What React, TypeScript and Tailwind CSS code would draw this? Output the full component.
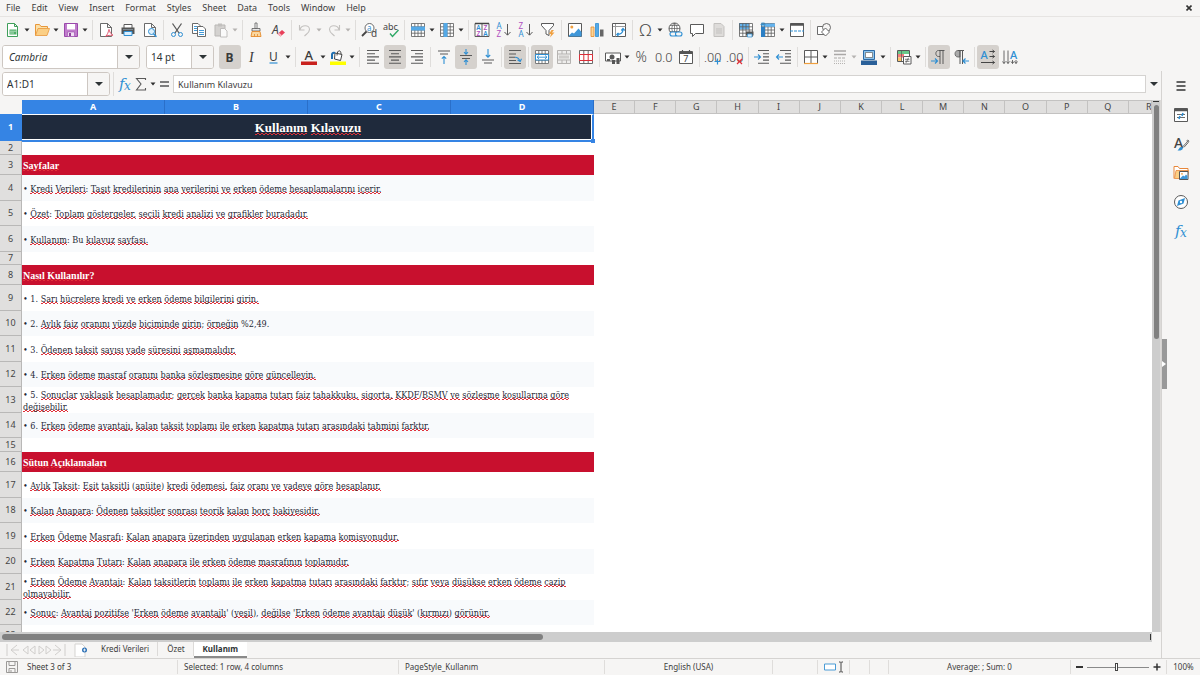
import { useState } from "react";
import type { ReactNode } from "react";

const GRAY = "#5a5a5a";
const BLUE = "#2f8fd3";
const PURPLE = "#b04fc0";
const ORANGE = "#f0a040";
const UI = "Noto Sans, sans-serif";

function gridLines(stroke: string) {
  return <path d="M1.5 1.5h13v13h-13zM1.5 4.8h13M1.5 8h13M1.5 11.2h13M4.8 1.5v13M8 1.5v13M11.2 1.5v13" fill="none" stroke={stroke} strokeWidth="0.8" />;
}

function pageShape(stroke: string, fill = "#fff") {
  return <path d="M2.5 1.5h7l4 4v9h-11zM9.5 1.5v4h4" fill={fill} stroke={stroke} strokeWidth="0.9" />;
}

function hLines(d: string) {
  return <path d={d} fill="none" stroke={GRAY} strokeWidth="1.1" />;
}

const icons: Record<string, ReactNode> = {
  new: (
    <>
      <path d="M2.5 1.5h7l3 3v10h-10zM9.5 1.5v3h3" fill="#fff" stroke="#3f9f5a" />
      <path d="M4.5 7.5h7v5h-7z" fill="#4fae68" />
      <path d="M5 9.2h6M5 11h4" stroke="#e5f5e8" strokeWidth="0.7" />
    </>
  ),
  open: (
    <>
      <path d="M1.5 13.5v-11h4l1.5 2h6.500v2" fill="#fbe0a8" stroke="#e8973a" />
      <path d="M1.500 13.500l2.500-7h11.500l-2.500 7z" fill="#fbcf85" stroke="#e8973a" strokeWidth="0.8" />
    </>
  ),
  save: (
    <>
      <path d="M1.500 1.500h13v13h-13z" fill="#c07ccc" stroke="#9a49ab" />
      <path d="M4 2h8v5.500h-8z" fill="#fff" />
      <path d="M4.500 10h7v4.500h-7z" fill="#f0dff3" stroke="#9a49ab" strokeWidth="0.6" />
      <path d="M6 11h2v3h-2z" fill="#8f419f" />
    </>
  ),
  pdf: (
    <>
      {pageShape(GRAY)}
      <path d="M7.500 14.500c2-2 3-4.500 3-6 0-1.500 1-1.500 1 0 0 2 2 4 3.500 4.500 0 1-4.500-.500-7.500 1.500z" fill="#fff" stroke="#d9304c" strokeWidth="0.8" />
    </>
  ),
  print: (
    <>
      <path d="M4 2.500h8v4h-8z" fill="#fff" stroke={GRAY} />
      <path d="M1.500 5.500h13v6.500h-13z" fill="#555" />
      <path d="M3 7.500h10" stroke="#7d8890" />
      <path d="M4 9.500h8v4h-8z" fill="#d9efff" stroke={BLUE} />
    </>
  ),
  preview: (
    <>
      {pageShape(GRAY)}
      <circle cx="9.500" cy="9.500" r="3" fill="#dff0fb" stroke={BLUE} />
      <path d="M11.500 11.800l3 3" stroke={BLUE} strokeWidth="1.500" />
    </>
  ),
  cut: (
    <>
      <path d="M3.500 1.500l6.500 9.500M12.500 1.500l-6.500 9.500" stroke={GRAY} strokeWidth="1.300" />
      <circle cx="4.500" cy="12.500" r="2" fill="none" stroke={BLUE} />
      <circle cx="11.500" cy="12.500" r="2" fill="none" stroke={BLUE} />
    </>
  ),
  copy: (
    <>
      <path d="M1.500 1.500h5.500l2.500 2.500v7.500h-8z" fill="#fff" stroke={GRAY} strokeWidth="0.9" />
      <path d="M3 4.500h3M3 6.500h3M3 8.500h3" stroke={BLUE} strokeWidth="0.9" />
      <path d="M6.500 4.500h5.500l2.500 2.500v7.500h-8z" fill="#fff" stroke={GRAY} strokeWidth="0.9" />
      <path d="M8 8.500h5M8 10.500h5M8 12.500h5" stroke={BLUE} strokeWidth="0.9" />
    </>
  ),
  paste: (
    <>
      <path d="M2 3h10v11h-10z" fill="#d4d2d0" stroke="#b9b7b5" />
      <path d="M5 1.500h4v3h-4z" fill="#c2c0be" />
      <path d="M7.500 6.500h4l2.500 2.500v6h-6.500z" fill="#fafafa" stroke="#b5b3b1" strokeWidth="0.8" />
    </>
  ),
  brush: (
    <>
      <path d="M7 1h2v5.500h-2z" fill="#fff" stroke={GRAY} strokeWidth="0.8" />
      <path d="M4 6.500h8v2.500h-8z" fill="#e9e9e9" stroke={GRAY} strokeWidth="0.8" />
      <path d="M4 9.500h8l1 5h-10z" fill="#fad7a0" stroke="#e48a2b" strokeWidth="0.9" />
      <path d="M6.500 14.500v-2.500M9.500 14.500v-2.500" stroke="#e48a2b" strokeWidth="0.8" />
    </>
  ),
  clear: (
    <>
      <text x="2" y="11.500" fontSize="12" fontStyle="italic" fontFamily={UI} fill="#444">A</text>
      <path d="M7.500 12l4.500-4 3 2.500-4.500 4z" fill="#e8405a" />
      <path d="M7.500 12l1.500-1.300 3 2.500-1.500 1.300z" fill="#f7b5bf" />
    </>
  ),
  undo: <path d="M2.500 3v5h5M3 7.500c1.500-5 9.500-5 9.500 0 0 3-2.500 4-5 6.500" fill="none" stroke="#c3c1bf" strokeWidth="1.100" />,
  redo: <path d="M13.500 3v5h-5M13 7.500c-1.500-5-9.500-5-9.500 0 0 3 2.500 4 5 6.500" fill="none" stroke="#c3c1bf" strokeWidth="1.100" />,
  find: (
    <>
      <circle cx="8.500" cy="6" r="4.500" fill="#fff" stroke={GRAY} strokeWidth="0.9" />
      <text x="6" y="8.500" fontSize="8" fontFamily={UI} fill={BLUE}>a</text>
      <path d="M5.500 9.500l-4.500 4.500" stroke="#444" strokeWidth="1.800" />
      <text x="10" y="15" fontSize="10" fontFamily={UI} fill="#444">d</text>
    </>
  ),
  spell: (
    <>
      <text x="0" y="8" fontSize="9" fontFamily={UI} fill="#444">abc</text>
      <path d="M7 11.500l2.500 3 6-6.500" fill="none" stroke="#2fa866" strokeWidth="1.400" />
    </>
  ),
  row: (
    <>
      <path d="M1 1h14v14h-14z" fill="#fff" />
      {gridLines(GRAY)}
      <path d="M1 4.500h14v4h-14z" fill="#55a9e6" />
    </>
  ),
  col: (
    <>
      <path d="M1 1h14v14h-14z" fill="#fff" />
      {gridLines(GRAY)}
      <path d="M4.500 1h4v14h-4z" fill="#55a9e6" />
    </>
  ),
  sort: (
    <>
      <path d="M1 1.500h14v13h-14zM8 2v13" fill="#fff" stroke={GRAY} />
      <path d="M1 1.500h14" stroke="#444" strokeWidth="1.500" />
      <g fontSize="6.500" fontFamily={UI} fontWeight="600">
        <text x="2.300" y="8.200" fill={BLUE}>A</text>
        <text x="2.500" y="13.800" fill={PURPLE}>Z</text>
        <text x="9.500" y="8.200" fill={PURPLE}>Z</text>
        <text x="9.300" y="13.800" fill={BLUE}>A</text>
      </g>
    </>
  ),
  az: (
    <>
      <text x="0.500" y="7" fontSize="8" fontFamily={UI} fill={BLUE}>A</text>
      <text x="0.500" y="15" fontSize="8" fontFamily={UI} fill={PURPLE}>Z</text>
      <path d="M11.500 2v11M8.500 10l3 3.200 3-3.200" fill="none" stroke={GRAY} />
    </>
  ),
  za: (
    <>
      <text x="0.500" y="7" fontSize="8" fontFamily={UI} fill={PURPLE}>Z</text>
      <text x="0.500" y="15" fontSize="8" fontFamily={UI} fill={BLUE}>A</text>
      <path d="M11.500 2v11M8.500 10l3 3.200 3-3.200" fill="none" stroke={GRAY} />
    </>
  ),
  filter: (
    <>
      <path d="M1.500 1.500h12v2l-4.500 5v5l-3-1.500v-3.500l-4.500-5z" fill="#fff" stroke={GRAY} />
      <path d="M11.500 8l-2.500 4h2l-1 3.500 4.500-5h-2.500l2-2.500z" fill={ORANGE} />
    </>
  ),
  image: (
    <>
      <path d="M1.500 1.500h13v13h-13z" fill="#fff" stroke={GRAY} />
      <circle cx="4.800" cy="5" r="1.500" fill={ORANGE} />
      <path d="M2 13.500l3-3 2 1 4.500-5 3 3.500v4.500h-12.500z" fill="#3f97d9" />
    </>
  ),
  chart: (
    <>
      <path d="M2 5h3v9.500h-3z" fill="#fbd598" stroke="#e48a2b" strokeWidth="0.8" />
      <path d="M6.500 1.500h3v13h-3z" fill="#55a9e6" stroke={BLUE} strokeWidth="0.8" />
      <path d="M11 7.500h3.500v7h-3.500z" fill="#666" />
    </>
  ),
  pivot: (
    <>
      <path d="M1.500 1.500h13v13h-13z" fill="#fff" stroke={GRAY} />
      <path d="M2 4.500h12.500M4.500 2v12.500" stroke="#9a9a9a" />
      <path d="M6 12.500c4 0 6-2 6-5.500M10.300 8.500l1.700-2 1.700 2M7.500 10.800l-1.700 1.700 1.700 1.700" fill="none" stroke={BLUE} strokeWidth="1.200" />
    </>
  ),
  omega: <text x="1.500" y="14" fontSize="17" fontFamily="Noto Sans, DejaVu Sans, sans-serif" fontWeight="300" fill="#4a4a4a">Ω</text>,
  link: (
    <>
      <circle cx="7.500" cy="6.500" r="5.500" fill="#fff" stroke={GRAY} />
      <path d="M2 6.500h11M7.500 1v11M3 3.500h9M3 9.500h9M7.500 1c-3.500 3-3.500 8 0 11M7.500 1c3.500 3 3.500 8 0 11" fill="none" stroke={GRAY} strokeWidth="0.7" />
      <rect x="3" y="10" width="6.500" height="4" rx="2" fill="#f6f5f4" stroke={BLUE} strokeWidth="1.100" />
      <rect x="8.500" y="10" width="6.500" height="4" rx="2" fill="#f6f5f4" stroke={BLUE} strokeWidth="1.100" />
    </>
  ),
  comment: <path d="M1.500 2.500h13v9h-8l-3 3v-3h-2z" fill="#fff" stroke={GRAY} />,
  header: (
    <>
      <path d="M3 1.500h7l3 3v10h-10z" fill="#dedcda" stroke="#c3c1bf" />
      <path d="M5 7h6M5 9h6M5 11h6" stroke="#c3c1bf" />
    </>
  ),
  printarea: (
    <>
      <path d="M1 1h14v14h-14z" fill="#fff" />
      <path d="M1 1h10v6.500h-10z" fill="#63b3ee" />
      {gridLines(GRAY)}
      <path d="M8 9.500h7.500v4h-7.500z" fill="#555" />
      <path d="M9.500 12h4.500v3h-4.500z" fill="#d9efff" stroke={BLUE} strokeWidth="0.7" />
    </>
  ),
  freeze: (
    <>
      <path d="M1 1h14v14h-14z" fill="#fff" />
      {gridLines(GRAY)}
      <path d="M1 5h4v10h-4z" fill="#2c7fc4" />
      <path d="M5 1.500h10v3.300h-10z" fill="#63b3ee" />
      <path d="M3 0v5M.500 2.500h5M1 .800l4 3.400M5 .800l-4 3.400" stroke={BLUE} strokeWidth="0.8" />
    </>
  ),
  split: (
    <>
      <path d="M1.500 1.500h13v13h-13z" fill="#fff" stroke={GRAY} />
      <path d="M1.500 2.500h13" stroke="#555" strokeWidth="2.500" />
      <path d="M1 9h14" stroke={BLUE} strokeDasharray="3 1" />
    </>
  ),
  shapes: (
    <>
      <path d="M1.500 4.500h8v8h-8z" fill="#fff" stroke={GRAY} strokeWidth="0.9" />
      <circle cx="10.500" cy="5.500" r="4" fill="#f6f5f4" stroke={GRAY} strokeWidth="0.9" />
      <path d="M9.500 6l4 4-4 4-4-4z" fill="#fff" stroke={GRAY} strokeWidth="0.9" />
    </>
  ),
  bold: <text x="3.500" y="12.500" fontSize="12" fontWeight="700" fontFamily={UI} fill="#3a3a3a">B</text>,
  italic: <text x="5" y="12.500" fontSize="14" fontStyle="italic" fontFamily="Liberation Serif, serif" fill="#3a3a3a">I</text>,
  underline: (
    <>
      <text x="3" y="11.500" fontSize="12" fontFamily={UI} fill="#3a3a3a">U</text>
      <path d="M3.500 14h8" stroke={BLUE} strokeWidth="1.200" />
    </>
  ),
  fontcolor: (
    <>
      <text x="3.500" y="10.500" fontSize="13" fontWeight="500" fontFamily={UI} fill="#3a3a3a">A</text>
      <path d="M0 12.500h16v3.500h-16z" fill="#c9211e" />
    </>
  ),
  highlight: (
    <>
      <path d="M5 4l7 1.500-1.500 6-6-1.500z" fill="#fff" stroke="#444" />
      <path d="M7 6.500c0-6 4-6 4-1.500" fill="none" stroke="#444" />
      <path d="M2 10v-4.500c0-1.500 1.500-2 3-1.500" fill="none" stroke="#1f6fb0" strokeWidth="2" />
      <path d="M0 12.500h16v3.500h-16z" fill="#ffff00" />
    </>
  ),
  alignleft: hLines("M2 1.500h12M2 4.700h8M2 7.900h12M2 11.100h8M2 14.300h12"),
  aligncenter: hLines("M2 1.500h12M4 4.700h8M2 7.900h12M4 11.100h8M2 14.300h12"),
  alignright: hLines("M2 1.500h12M6 4.700h8M2 7.900h12M6 11.100h8M2 14.300h12"),
  top: (
    <>
      {hLines("M2 2h12M4 5h8")}
      <path d="M8 15v-7.500M5.800 9.700l2.200-2.200 2.200 2.200" fill="none" stroke={BLUE} strokeWidth="1.100" />
    </>
  ),
  middle: (
    <>
      {hLines("M2 6.500h12M4 9.500h8")}
      <path d="M8 0v5M6 3.200l2 2 2-2M8 16v-5M6 12.800l2-2 2 2" fill="none" stroke={BLUE} strokeWidth="1.100" />
    </>
  ),
  bottom: (
    <>
      {hLines("M2 11h12M4 14h8")}
      <path d="M8 0v8M5.800 6l2.200 2.200 2.200-2.200" fill="none" stroke={BLUE} strokeWidth="1.100" />
    </>
  ),
  wrap: (
    <>
      {hLines("M2 1.500h12M2 5h7M2 8.200h6M2 11.500h7M2 14.500h12")}
      <path d="M8 8.200c3 0 4 1 5 4M10.500 11l2.700 1.500 1.300-2.700" fill="none" stroke={BLUE} strokeWidth="1.100" />
    </>
  ),
  merge: (
    <>
      <path d="M1 1h14v14h-14z" fill="#fff" />
      {gridLines(GRAY)}
      <path d="M1.500 5.500h13v5.500h-13z" fill="#fff" stroke={BLUE} />
      <path d="M3 8.200h10M5 6.500l-2 1.700 2 1.700M11 6.500l2 1.700-2 1.700" fill="none" stroke={BLUE} strokeWidth="0.9" />
    </>
  ),
  mergegray: (
    <>
      <path d="M1 1h14v14h-14z" fill="#eeedec" />
      <path d="M1.500 1.500h13v13h-13zM1.500 5h13M1.500 11h13M6 1.500v3.500M10.500 1.500v3.500M6 11v3.500M10.500 11v3.500" fill="none" stroke="#b5b3b1" />
      <path d="M3 6.500h10v3h-10z" fill="#cfcdcb" />
    </>
  ),
  mergered: (
    <>
      <path d="M1.500 1.500h13v13h-13zM5.800 1.500v13M10.200 1.500v13" fill="#fff" stroke={GRAY} strokeWidth="0.9" />
      <path d="M1.500 5.500h13v6h-13zM5.800 5.500v6M10.200 5.500v6" fill="#fff" stroke="#d9303a" />
    </>
  ),
  currency: (
    <>
      <path d="M.500 4h15v8h-15z" fill="#fff" stroke={GRAY} />
      <circle cx="7" cy="8" r="2.500" fill={GRAY} />
      <path d="M7 15v-4h3v4zM11.500 15v-6h3v6z" fill="#555" />
      <path d="M2 10h3v2h-3z" fill={GRAY} />
    </>
  ),
  percent: <text x="1.500" y="13" fontSize="14" fontWeight="300" fontFamily={UI} fill="#4a4a4a">%</text>,
  decimal: <text x="-1" y="13" fontSize="13" fontWeight="300" fontFamily="Roboto, sans-serif" fill="#4a4a4a">0.0</text>,
  date: (
    <>
      <path d="M1.500 2.500h13v12h-13z" fill="#fff" stroke={GRAY} />
      <path d="M1.500 4h13" stroke="#555" strokeWidth="2" />
      <path d="M4.500 1v3M11.500 1v3" stroke="#555" strokeWidth="1.200" />
      <text x="5.300" y="13.300" fontSize="9" fontFamily={UI} fill="#444">7</text>
    </>
  ),
  adddec: (
    <>
      <text x="-1" y="12.500" fontSize="13" fontWeight="300" fontFamily="Roboto, sans-serif" fill="#4a4a4a">.00</text>
      <path d="M12.500 9.500v6M9.500 12.500h6" stroke={BLUE} strokeWidth="1.200" />
    </>
  ),
  deldec: (
    <>
      <text x="-1" y="12.500" fontSize="13" fontWeight="300" fontFamily="Roboto, sans-serif" fill="#4a4a4a">.00</text>
      <path d="M10 10l5 5M15 10l-5 5" stroke="#e0303a" strokeWidth="1.200" />
    </>
  ),
  indent: (
    <>
      {hLines("M4 1.500h11M9 4.700h6M9 7.900h6M9 11.100h6M4 14.300h11")}
      <path d="M0 8h6.500M4 5.500l2.500 2.500-2.500 2.500" fill="none" stroke={BLUE} strokeWidth="1.100" />
    </>
  ),
  outdent: (
    <>
      {hLines("M4 1.500h11M9 4.700h6M9 7.900h6M9 11.100h6M4 14.300h11")}
      <path d="M7 8h-6.500M3 5.500l-2.500 2.500 2.500 2.500" fill="none" stroke={BLUE} strokeWidth="1.100" />
    </>
  ),
  borders: (
    <>
      <path d="M1.500 1.500h13v13h-13zM8 1.500v13M1.500 8h13" fill="#fff" stroke={GRAY} />
      <path d="M1 14.500h14" stroke={ORANGE} strokeWidth="1.200" />
    </>
  ),
  borderstyle: (
    <>
      <path d="M2 2h12M2 5.500h12" stroke="#aaa8a6" strokeWidth="1.600" />
      <path d="M2 9h12" stroke="#aaa8a6" strokeDasharray="3 1" />
      <path d="M2 12h12M2 14.500h12" stroke="#b5b3b1" strokeDasharray="1 1" />
    </>
  ),
  bordercolor: (
    <>
      <path d="M2.500 1.500h11v9h-11z" fill="#8cc4ee" stroke="#2d6aa5" />
      <path d="M4.500 3.500h7v5h-7z" fill="#fff" stroke="#666" strokeWidth="0.700" />
      <path d="M0 11.500h16v4.500h-16z" fill="#2a6099" />
    </>
  ),
  cond: (
    <>
      <path d="M1.500 1.500h12v11h-12z" fill="#fff" stroke={GRAY} />
      <path d="M2 2h11v3h-11z" fill="#69c989" />
      <path d="M2 5h6v3.500h-6z" fill="#f47b7b" />
      <path d="M2 8.500h4v3.500h-4z" fill="#fbc66b" />
      <path d="M5.500 2v10" stroke={GRAY} strokeWidth="0.700" />
      <path d="M7.500 7.500h7.500v7.500h-7.500z" fill="#fff" stroke={GRAY} />
      <path d="M9 10.300h4.500M9 12.300h4.500M12.500 8.800l-2.500 5" stroke={GRAY} strokeWidth="0.800" />
    </>
  ),
  ltr: (
    <>
      <path d="M13.500 1.500h-6c-3.500 0-3.500 6 0 6h1.500M9 1.500v13.500M12 1.500v13.500" fill="none" stroke={GRAY} />
      <path d="M0 12h6M4 9.500l2.500 2.500-2.500 2.500" fill="none" stroke={BLUE} strokeWidth="1.200" />
    </>
  ),
  rtl: (
    <>
      <path d="M7 1.500h-2c-4 0-4 6.500 0 6.500h2z" fill="#aaa" stroke={GRAY} strokeWidth="0.8" />
      <path d="M5 1.500h6M7 1.500v13.500M9.500 1.500v13.500" fill="none" stroke={GRAY} />
      <path d="M16 12h-5.500M12.500 9.500l-2.500 2.500 2.500 2.500" fill="none" stroke={BLUE} strokeWidth="1.200" />
    </>
  ),
  horiz: (
    <>
      <text x="0.500" y="10" fontSize="11" fontWeight="500" fontFamily={UI} fill={BLUE}>A</text>
      <path d="M9.500 2.500h5M9.500 7.500h5M1 13.500h13.500M12.500 1l2 1.500-2 1.500M12.500 6l2 1.500-2 1.500M12.500 12l2 1.500-2 1.500" fill="none" stroke="#444" />
    </>
  ),
  vert: (
    <>
      <path d="M2 1.500v13M6 1.500v13M10.500 11v3.500M14 11v3.500M.500 12.500l1.500 2 1.500-2M4.500 12.500l1.500 2 1.500-2M9 12.500l1.500 2 1.500-2M12.500 12.500l1.500 2 1.500-2" fill="none" stroke={GRAY} strokeWidth="0.900" />
      <text x="8" y="10" fontSize="11" fontWeight="500" fontFamily={UI} fill={BLUE}>A</text>
    </>
  ),
  menu: <path d="M3.500 4h9M3.500 8h9M3.500 12h9" stroke="#333" strokeWidth="1.300" />,
  properties: (
    <>
      <path d="M1.500 1.500h13v13h-13z" fill="#fff" stroke={GRAY} />
      <path d="M1.500 3h13" stroke="#555" strokeWidth="2.500" />
      <path d="M4 7.500h8M4 10.500h8" stroke={GRAY} strokeWidth="0.900" />
      <path d="M10 6l-1 3M7 9l-1 3" stroke={BLUE} strokeWidth="1.600" />
    </>
  ),
  styles: (
    <>
      <text x="1" y="12" fontSize="14" fontWeight="500" fontFamily={UI} fill="#444">A</text>
      <path d="M15.500 4.500l-6 6.500M13.500 4.800c2-1.500 3 .500 1.500 2l-4 4.500" fill="none" stroke={GRAY} strokeWidth="0.900" />
      <path d="M4.500 14.500c1.500-1 1.500-3.500 4-3.500 2 0 2.500 4-4 3.500z" fill={BLUE} />
    </>
  ),
  gallery: (
    <>
      <path d="M1 13.500v-12h4l1.500 2h8.500v2.500" fill="#fff" stroke="#e8873a" />
      <path d="M1.500 13.500l1.500-8h12.500l-1 8z" fill="#fbcf85" stroke="#e8873a" strokeWidth="0.800" />
      <path d="M6.500 6.500h8.500v8h-8.500z" fill="#fff" stroke="#555" />
      <path d="M7 13.500l3-3 1.500 1 1.500-2 1.500 1.500v3h-7.500z" fill="#3f97d9" />
      <circle cx="9" cy="8.800" r="0.900" fill={ORANGE} />
    </>
  ),
  navigator: (
    <>
      <circle cx="8" cy="8" r="6.500" fill="#fff" stroke={GRAY} />
      <path d="M12 4l-1.500 5.500-6.500 2.500 1.500-5.500z" fill={BLUE} />
      <circle cx="8" cy="8" r="1.200" fill="#fff" />
    </>
  ),
  fx: (
    <g fontStyle="italic" fontFamily="DejaVu Serif, serif" fill={BLUE}>
      <text x="2" y="12.500" fontSize="15">f</text>
      <text x="7" y="13.500" fontSize="12">x</text>
    </g>
  ),
  sum: <path d="M12.500 4v-1.500h-9l4.500 5.500-4.500 6h9v-2" fill="none" stroke={GRAY} strokeWidth="1.100" />,
  equals: <path d="M4 6h9M4 10h9" stroke="#555" strokeWidth="1.400" />,
};

function Icon({ name }: { name: string }) {
  return (
    <svg viewBox="0 0 16 16" className="size-4 shrink-0 overflow-visible" aria-hidden="true">
      {icons[name]}
    </svg>
  );
}

function Caret({ dim = false }: { dim?: boolean }) {
  return (
    <svg viewBox="0 0 6 4" className={`h-1 w-1.5 shrink-0 ${dim ? "text-[#b5b3b1]" : "text-[#2e2e2e]"}`} aria-hidden="true">
      <path d="M.5.5h5L3 3.500z" fill="currentColor" />
    </svg>
  );
}

type Tool = { icon: string; label: string; menu?: boolean; dim?: boolean; active?: boolean };

const t = (icon: string, label: string, extra: Partial<Tool> = {}): Tool => ({ icon, label, ...extra });

const standardTools: Tool[][] = [
  [t("new", "New", { menu: true }), t("open", "Open", { menu: true }), t("save", "Save", { menu: true })],
  [t("pdf", "Export as PDF"), t("print", "Print"), t("preview", "Print Preview")],
  [t("cut", "Cut"), t("copy", "Copy"), t("paste", "Paste", { menu: true, dim: true })],
  [t("brush", "Clone Formatting"), t("clear", "Clear Direct Formatting")],
  [t("undo", "Undo", { menu: true, dim: true }), t("redo", "Redo", { menu: true, dim: true })],
  [t("find", "Find and Replace"), t("spell", "Spelling")],
  [t("row", "Row", { menu: true }), t("col", "Column", { menu: true })],
  [t("sort", "Sort"), t("az", "Sort Ascending"), t("za", "Sort Descending"), t("filter", "AutoFilter")],
  [t("image", "Insert Image"), t("chart", "Insert Chart"), t("pivot", "Insert Pivot Table")],
  [t("omega", "Special Character", { menu: true }), t("link", "Hyperlink"), t("comment", "Comment"), t("header", "Headers and Footers", { dim: true })],
  [t("printarea", "Define Print Area"), t("freeze", "Freeze Rows and Columns", { menu: true }), t("split", "Split Window")],
  [t("shapes", "Show Draw Functions")],
];

const formatTools: Tool[][] = [
  [t("bold", "Bold", { active: true }), t("italic", "Italic"), t("underline", "Underline", { menu: true })],
  [t("fontcolor", "Font Color", { menu: true }), t("highlight", "Background Color", { menu: true })],
  [t("alignleft", "Align Left"), t("aligncenter", "Center Horizontally", { active: true }), t("alignright", "Align Right")],
  [t("top", "Align Top"), t("middle", "Center Vertically", { active: true }), t("bottom", "Align Bottom")],
  [t("wrap", "Wrap Text", { active: true })],
  [t("merge", "Merge and Center Cells", { active: true }), t("mergegray", "Merge Cells", { dim: true }), t("mergered", "Unmerge Cells")],
  [t("currency", "Format as Currency", { menu: true }), t("percent", "Format as Percent"), t("decimal", "Format as Number"), t("date", "Format as Date")],
  [t("adddec", "Add Decimal Place"), t("deldec", "Delete Decimal Place")],
  [t("indent", "Increase Indent"), t("outdent", "Decrease Indent")],
  [t("borders", "Borders", { menu: true }), t("borderstyle", "Border Style", { menu: true, dim: true }), t("bordercolor", "Border Color", { menu: true })],
  [t("cond", "Conditional", { menu: true })],
  [t("ltr", "Left-To-Right", { active: true }), t("rtl", "Right-To-Left")],
  [t("horiz", "Text direction from left to right", { active: true }), t("vert", "Text direction from top to bottom")],
];

function ToolGroups({ groups }: { groups: Tool[][] }) {
  return (
    <>
      {groups.map((group, i) => (
        <div key={group[0].icon} className="flex shrink-0 items-center">
          {group.map((tool) => (
            <button
              key={tool.icon}
              type="button"
              aria-label={tool.label}
              disabled={tool.dim}
              className={`flex h-6 items-center rounded-[3px] ${tool.menu ? "w-[29px]" : "w-[22px]"} ${
                tool.active ? "bg-[#d5d1cd]" : ""
              }`}
            >
              <span className="flex w-[22px] shrink-0 justify-center">
                <Icon name={tool.icon} />
              </span>
              {tool.menu ? <Caret dim={tool.dim} /> : null}
            </button>
          ))}
          {i < groups.length - 1 ? (
            <span className={`mr-[2px] h-5 border-r border-[#dfdddb] ${group[group.length - 1].menu ? "w-1" : "w-[3px]"}`} />
          ) : null}
        </div>
      ))}
    </>
  );
}

function ComboBox({ id, label, value, inputClass }: { id: string; label: string; value: string; inputClass: string }) {
  return (
    <div className="flex h-6 shrink-0 overflow-hidden rounded-[3px] border border-[#cdc7c2] bg-white">
      <input id={id} aria-label={label} defaultValue={value} className={`bg-white px-1 text-[10px] text-[#2e3436] outline-none ${inputClass}`} />
      <button type="button" aria-label={`${label} list`} className="flex w-[22px] items-center justify-center border-l border-[#cdc7c2] bg-[#f6f5f4]">
        <svg viewBox="0 0 8 4" className="h-1 w-2" aria-hidden="true">
          <path d="M0 0h8L4 4z" fill="#2e3436" />
        </svg>
      </button>
    </div>
  );
}

type Row = { n: number; kind: "title" | "gap" | "section" | "item"; height: string; text?: string; tint?: boolean };

const rows: Row[] = [
  { n: 1, kind: "title", height: "h-[27px]", text: "Kullanım Kılavuzu" },
  { n: 2, kind: "gap", height: "h-[14px]" },
  { n: 3, kind: "section", height: "h-5", text: "Sayfalar" },
  { n: 4, kind: "item", height: "h-[26px]", tint: true, text: "Kredi Verileri: Taşıt kredilerinin ana verilerini ve erken ödeme hesaplamalarını içerir." },
  { n: 5, kind: "item", height: "h-[25px]", text: "Özet: Toplam göstergeler, seçili kredi analizi ve grafikler buradadır." },
  { n: 6, kind: "item", height: "h-[26px]", tint: true, text: "Kullanım: Bu kılavuz sayfası." },
  { n: 7, kind: "gap", height: "h-[13px]" },
  { n: 8, kind: "section", height: "h-5", text: "Nasıl Kullanılır?" },
  { n: 9, kind: "item", height: "h-[26px]", text: "1. Sarı hücrelere kredi ve erken ödeme bilgilerini girin." },
  { n: 10, kind: "item", height: "h-[25px]", tint: true, text: "2. Aylık faiz oranını yüzde biçiminde girin; örneğin %2,49." },
  { n: 11, kind: "item", height: "h-[26px]", text: "3. Ödenen taksit sayısı vade süresini aşmamalıdır." },
  { n: 12, kind: "item", height: "h-[25px]", tint: true, text: "4. Erken ödeme masraf oranını banka sözleşmesine göre güncelleyin." },
  { n: 13, kind: "item", height: "h-[26px]", text: "5. Sonuçlar yaklaşık hesaplamadır; gerçek banka kapama tutarı faiz tahakkuku, sigorta, KKDF/BSMV ve sözleşme koşullarına göre değişebilir." },
  { n: 14, kind: "item", height: "h-[25px]", tint: true, text: "6. Erken ödeme avantajı, kalan taksit toplamı ile erken kapatma tutarı arasındaki tahmini farktır." },
  { n: 15, kind: "gap", height: "h-[14px]" },
  { n: 16, kind: "section", height: "h-5", text: "Sütun Açıklamaları" },
  { n: 17, kind: "item", height: "h-[26px]", text: "Aylık Taksit: Eşit taksitli (anüite) kredi ödemesi, faiz oranı ve vadeye göre hesaplanır." },
  { n: 18, kind: "item", height: "h-[25px]", tint: true, text: "Kalan Anapara: Ödenen taksitler sonrası teorik kalan borç bakiyesidir." },
  { n: 19, kind: "item", height: "h-[26px]", text: "Erken Ödeme Masrafı: Kalan anapara üzerinden uygulanan erken kapama komisyonudur." },
  { n: 20, kind: "item", height: "h-[25px]", tint: true, text: "Erken Kapatma Tutarı: Kalan anapara ile erken ödeme masrafının toplamıdır." },
  { n: 21, kind: "item", height: "h-[26px]", text: "Erken Ödeme Avantajı: Kalan taksitlerin toplamı ile erken kapatma tutarı arasındaki farktır; sıfır veya düşükse erken ödeme cazip olmayabilir." },
  { n: 22, kind: "item", height: "h-[25px]", tint: true, text: "Sonuç: Avantaj pozitifse 'Erken ödeme avantajlı' (yeşil), değilse 'Erken ödeme avantajı düşük' (kırmızı) görünür." },
  { n: 23, kind: "gap", height: "h-5" },
];

// Words the spell checker accepts stay without the red wave.
function SpellChecked({ text }: { text: string }) {
  return (
    <>
      {text.split(/(\p{L}+[.,]?)/u).map((part, i) =>
        i % 2 === 0 || part === "Bu" ? (
          part
        ) : (
          <span
            key={i}
            className="bg-[linear-gradient(90deg,#e0303a_50%,transparent_50%),linear-gradient(90deg,transparent_50%,#e0303a_50%)] bg-[length:4px_1px] bg-[position:0_100%,0_calc(100%-1px)] bg-repeat-x"
          >
            {part}
          </span>
        ),
      )}
    </>
  );
}

function RowContent({ row }: { row: Row }) {
  if (row.kind === "title") {
    return (
      <td colSpan={4} className="relative bg-[#1f2a3c] p-0 pt-px text-center align-middle font-['Liberation_Serif',serif] text-[13px] leading-4 font-bold text-white">
        <SpellChecked text={row.text ?? ""} />
        <span className="absolute inset-x-0 top-0 -bottom-px border-t border-r-2 border-b-2 border-t-white border-r-[#3584e4] border-b-[#3584e4]">
          <span className="block size-full border-r border-b border-white" />
        </span>
        <span className="absolute -right-px -bottom-[2px] size-1 bg-[#3584e4]" />
      </td>
    );
  }
  if (row.kind === "section") {
    return (
      <td colSpan={4} className="bg-[#c8102e] p-0 pt-px pl-px align-middle font-['Liberation_Serif',serif] text-[10px] leading-3 font-bold text-white">
        <SpellChecked text={row.text ?? ""} />
      </td>
    );
  }
  if (row.kind === "item") {
    return (
      <td colSpan={4} className={`p-0 pt-px pl-px align-middle font-['DejaVu_Serif_Condensed','DejaVu_Serif',serif] text-[9px] leading-3 text-[#1f2937] ${row.tint ? "bg-[#f8fafc]" : ""}`}>
        • <SpellChecked text={row.text ?? ""} />
      </td>
    );
  }
  return <td colSpan={4} className="p-0" />;
}

const wideColumns = ["A", "B", "C", "D"];
const narrowColumns = ["E", "F", "G", "H", "I", "J", "K", "L", "M", "N", "O", "P", "Q", "R"];

function SheetTable() {
  return (
    <table className="w-full table-fixed border-separate border-spacing-0 text-[9px] leading-3">
      <thead>
        <tr className="h-[14px]">
          <th className="w-[22px] bg-[#f6f5f4] p-0" aria-label="Select all" />
          {wideColumns.map((c) => (
            <th key={c} scope="col" className="w-[143px] border-r border-[#2a6fc9] bg-[#3584e4] p-0 font-bold text-white">
              {c}
            </th>
          ))}
          {narrowColumns.map((c) => (
            <th
              key={c}
              scope="col"
              className="overflow-hidden border-t border-r border-b border-[#c3c2c1] bg-[#e0dfde] p-0 font-normal text-[#454545] last:w-[23px] last:pl-[17px] last:text-left"
            >
              {c}
            </th>
          ))}
        </tr>
      </thead>
      <tbody>
        {rows.map((row) => (
          <tr key={row.n} className={row.height}>
            <th
              scope="row"
              className={`border-r border-b p-0 align-middle ${
                row.n === 1 ? "border-[#3584e4] bg-[#3584e4] font-bold text-white" : "border-[#b9b8b7] bg-[#e0dfde] font-normal text-[#454545]"
              }`}
            >
              {row.n}
            </th>
            <RowContent row={row} />
            <td colSpan={14} className="p-0" />
          </tr>
        ))}
      </tbody>
    </table>
  );
}

function SheetTabs() {
  const [current, setCurrent] = useState("Kullanım");
  return (
    <nav className="flex h-4 items-stretch pl-1.5 text-[8px]" aria-label="Sheets">
      <button type="button" aria-label="Scroll sheets" className="flex items-center">
        <svg viewBox="0 0 60 12" className="h-3 w-[60px]" fill="none" stroke="#d0cecc" aria-hidden="true">
          <path d="M1 0v12M11 1l-6 5 6 5M5 6h8M22 2l-5 4 5 4v-8M29 2l-5 4 5 4v-8M33 2l5 4-5 4v-8M40 2l5 4-5 4v-8M49 1l6 5-6 5M47 6h8M59 0v12" />
        </svg>
      </button>
      <button type="button" aria-label="Add sheet" className="ml-2 flex items-center">
        <svg viewBox="0 0 14 14" className="size-[14px]" aria-hidden="true">
          <path d="M1 1h7l3 3v10h-10z" fill="#fff" stroke="#d5d3d1" />
          <circle cx="10.500" cy="7" r="2.500" fill="#2a6fb5" />
          <path d="M9 7h3M10.500 5.500v3" stroke="#fff" strokeWidth="0.800" />
        </svg>
      </button>
      <div className="ml-1 flex items-stretch">
        {["Kredi Verileri", "Özet", "Kullanım"].map((name) => (
          <button
            key={name}
            type="button"
            onClick={() => setCurrent(name)}
            aria-current={current === name}
            className={`flex items-center border-b-2 px-[9px] ${
              current === name ? "border-[#8a8a8a] bg-white font-bold text-[#2e3436]" : "border-transparent text-[#3d3d3d] shadow-[inset_-1px_0_0_#dcdad8]"
            }`}
          >
            {name}
          </button>
        ))}
      </div>
    </nav>
  );
}

function StatusBar() {
  const cell = "flex min-w-0 items-center border-r border-[#dfdddb] whitespace-nowrap";
  return (
    <footer className="grid h-[17px] grid-cols-[178fr_221fr_206fr_168fr_45fr_32fr_20fr_19fr_182fr_96fr_33fr] items-stretch border-t border-[#d5d3d1] py-px text-[8px] text-[#3d3d3d]">
      <span className={`${cell} gap-[9px] pl-1.5`}>
        <svg viewBox="0 0 12 12" className="size-3" fill="#f6f5f4" stroke="#9b9997" aria-hidden="true">
          <path d="M.500.500h11v11h-11zM3 .500v4h6v-4M3 11.500v-4h6v4M5 9v2" />
        </svg>
        Sheet 3 of 3
      </span>
      <span className={`${cell} pl-1.5`}>Selected: 1 row, 4 columns</span>
      <span className={`${cell} pl-1.5`}>PageStyle_Kullanım</span>
      <span className={`${cell} justify-center`}>English (USA)</span>
      <span className={cell} />
      <span className={`${cell} justify-center`}>
        <svg viewBox="0 0 20 12" className="h-3 w-5" fill="none" aria-hidden="true">
          <path d="M.500 3h11v6h-11z" fill="#fff" stroke="#4a9bd5" />
          <path d="M15 1h1.500l.500.500.500-.500h1.500M17 1.500v9M15 11h1.500l.500-.500.500.500h1.500" stroke="#444" />
        </svg>
      </span>
      <span className={cell} />
      <span className={cell} />
      <span className={`${cell} justify-center`}>Average: ; Sum: 0</span>
      <span className={`${cell} gap-1 px-[5px]`}>
        <button type="button" aria-label="Zoom out" className="h-[2px] w-[7px] shrink-0 bg-[#333]" />
        <input
          aria-label="Zoom"
          type="range"
          min="0"
          max="100"
          defaultValue="48"
          className="h-px min-w-0 flex-1 appearance-none bg-[#8a8a8a] [&::-webkit-slider-thumb]:h-2 [&::-webkit-slider-thumb]:w-[3px] [&::-webkit-slider-thumb]:appearance-none [&::-webkit-slider-thumb]:border [&::-webkit-slider-thumb]:border-[#444] [&::-webkit-slider-thumb]:bg-white"
        />
        <button type="button" aria-label="Zoom in" className="shrink-0">
          <svg viewBox="0 0 8 8" className="size-2" aria-hidden="true">
            <path d="M4 .500v7M.500 4h7" stroke="#333" strokeWidth="1.500" />
          </svg>
        </button>
      </span>
      <span className="flex items-center justify-center">100%</span>
    </footer>
  );
}

const sidebarItems = [
  ["menu", "Sidebar Settings"],
  ["properties", "Properties"],
  ["styles", "Styles"],
  ["gallery", "Gallery"],
  ["navigator", "Navigator"],
  ["fx", "Functions"],
];

export default function App() {
  return (
    <div className="flex h-screen flex-col overflow-hidden bg-[#f6f5f4] font-['Noto_Sans',sans-serif] text-[#3d3d3d]">
      <header className="flex h-[17px] items-center justify-between border-b border-[#e6e4e2] text-[9px]">
        <nav className="flex gap-px pl-px" aria-label="Menu bar">
          {["File", "Edit", "View", "Insert", "Format", "Styles", "Sheet", "Data", "Tools", "Window", "Help"].map((m) => (
            <button key={m} type="button" className="px-[5px]">
              {m}
            </button>
          ))}
        </nav>
        <button type="button" aria-label="Close document" className="mr-2">
          <svg viewBox="0 0 6 6" className="size-1.5" aria-hidden="true">
            <path d="M.500.500l5 5M5.500.500l-5 5" stroke="#333" strokeWidth="1.600" />
          </svg>
        </button>
      </header>

      <div className="flex h-[26px] shrink-0 items-center pl-[2px]" role="toolbar" aria-label="Standard">
        <ToolGroups groups={standardTools} />
      </div>

      <div className="flex h-7 shrink-0 items-center pl-[2px]" role="toolbar" aria-label="Formatting">
        <ComboBox id="font-name" label="Font Name" value="Cambria" inputClass="w-[114px] pl-1.5 italic" />
        <span className="w-[6px] shrink-0" />
        <ComboBox id="font-size" label="Font Size" value="14 pt" inputClass="w-11 pl-1" />
        <span className="w-[5px] shrink-0" />
        <ToolGroups groups={formatTools} />
      </div>

      <div className="flex min-h-0 flex-1">
        <main className="flex min-w-0 flex-1 flex-col">
          <div className="flex h-[29px] shrink-0 items-start pt-px pl-[2px]">
            <ComboBox id="name-box" label="Name Box" value="A1:D1" inputClass="w-[84px]" />
            <div className="ml-[3px] flex h-6 items-center border-l border-[#dfdddb] pl-[3px]">
              <button type="button" aria-label="Function Wizard">
                <Icon name="fx" />
              </button>
              <button type="button" aria-label="Select Function" className="flex items-center gap-px">
                <Icon name="sum" />
                <Caret />
              </button>
              <button type="button" aria-label="Formula" className="mr-px">
                <Icon name="equals" />
              </button>
            </div>
            <input
              id="formula"
              aria-label="Formula input"
              defaultValue="Kullanım Kılavuzu"
              className="mt-[3px] h-[18px] min-w-0 flex-1 border border-[#d5d3d1] bg-white px-1 text-[9px] text-[#3d3d3d] outline-none"
            />
            <button type="button" aria-label="Expand Formula Bar" className="flex h-6 w-[15px] items-center justify-center">
              <svg viewBox="0 0 8 4" className="h-1 w-2" aria-hidden="true">
                <path d="M0 0h8L4 4z" fill="#2e3436" />
              </svg>
            </button>
          </div>

          <div className="flex min-h-0 flex-1">
            <div className="min-w-0 flex-1 overflow-hidden bg-white">
              <SheetTable />
            </div>
            <div className="flex w-[9px] flex-col items-center border-r border-[#dcdad8] bg-[#cdcdcd]">
              <span className="mt-px h-px w-1.5 bg-[#333]" />
              <span className="mt-[3px] h-[44%] w-[5px] rounded-full bg-[#808080]" />
            </div>
          </div>

          <div className="mr-[9px] flex h-[10px] shrink-0 items-center bg-[#cdcdcd] pl-[2px]">
            <span className="h-1.5 w-[47%] rounded-full bg-[#808080]" />
            <span className="mr-px ml-auto h-1.5 w-px bg-[#333]" />
          </div>
          <SheetTabs />
        </main>

        <aside className="relative flex w-[39px] shrink-0 flex-col items-center gap-[13px] border-l border-[#d5d3d1] pt-[7px]" aria-label="Sidebar">
          {sidebarItems.map(([icon, label]) => (
            <button key={icon} type="button" aria-label={label}>
              <Icon name={icon} />
            </button>
          ))}
          <button type="button" aria-label="Hide sidebar" className="absolute top-[268px] left-0 flex h-[50px] w-[5px] items-center bg-[#999]">
            <svg viewBox="0 0 4 6" className="h-1.5 w-1" aria-hidden="true">
              <path d="M0 0l4 3-4 3z" fill="#fff" />
            </svg>
          </button>
        </aside>
      </div>

      <StatusBar />
    </div>
  );
}
